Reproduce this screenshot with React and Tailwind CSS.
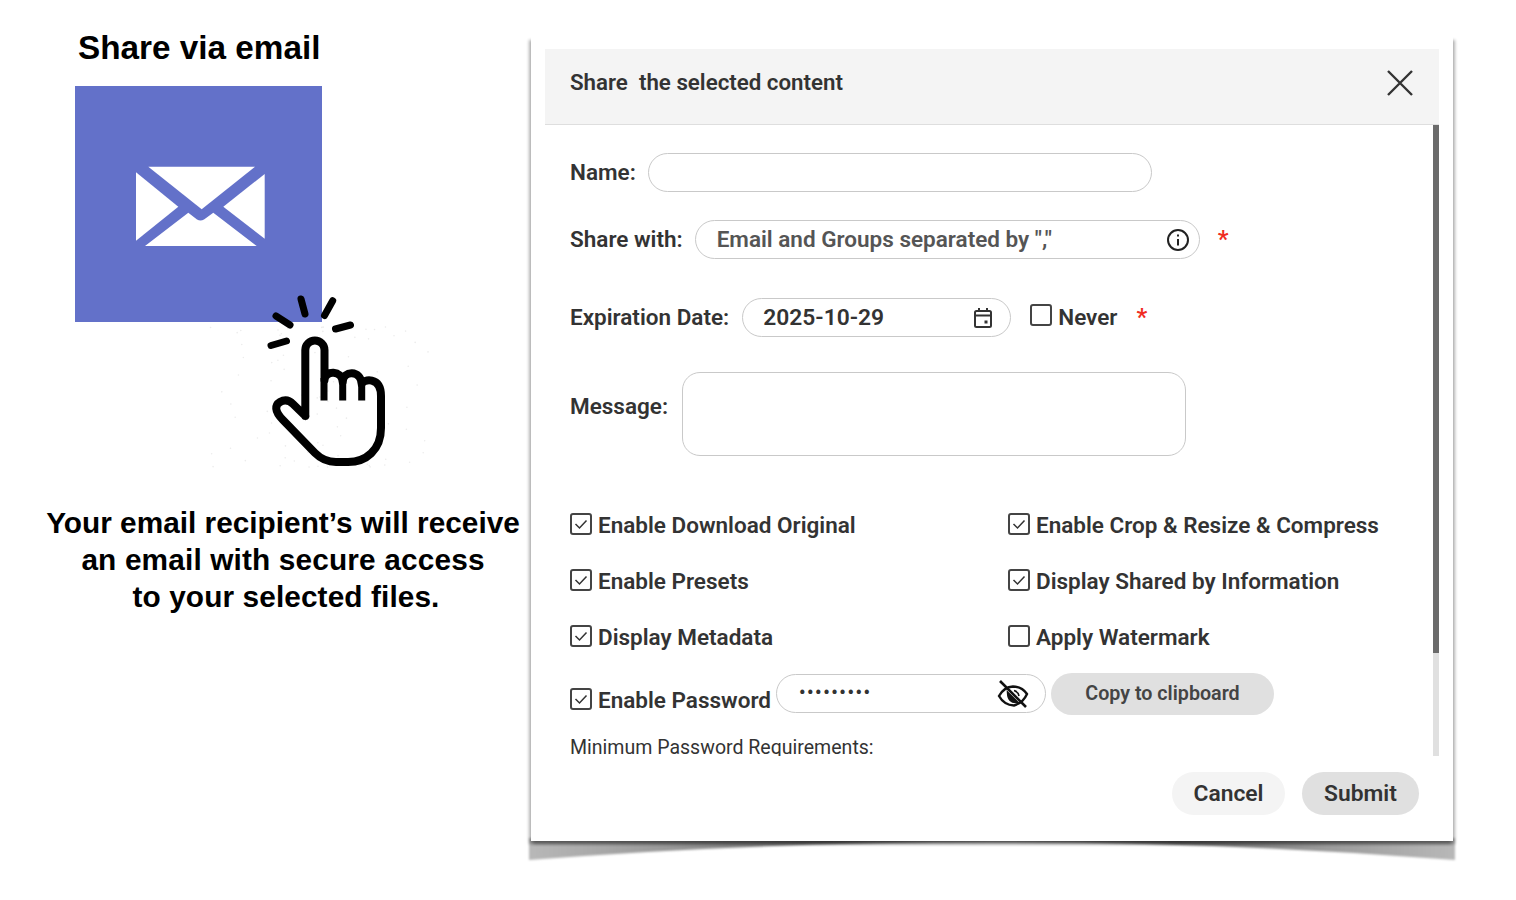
import React from "react";

const Box = ({ checked, className = "" }) => (
  <span className={`flex h-[22px] w-[22px] shrink-0 items-center justify-center rounded-[3px] border-2 border-[#444] ${className}`}>
    {checked && (
      <svg width="14" height="14" viewBox="0 0 14 14" fill="none" stroke="#333" strokeWidth="1.5">
        <path d="M1.5 7 L5.5 11 L12.5 3.5" />
      </svg>
    )}
  </span>
);

const Check = ({ label, checked = true }) => (
  <div className="flex h-[28px] items-center gap-[6px]">
    <Box checked={checked} className="-mt-1" />
    <span className="text-[22.5px] font-semibold text-[#333]">{label}</span>
  </div>
);

const Field = ({ className = "", children }) => (
  <div className={`flex h-[39px] items-center rounded-full border border-[#c9c9c9] bg-white ${className}`}>{children}</div>
);

const Label = ({ children }) => (
  <span className="text-[22.5px] font-semibold whitespace-nowrap text-[#333]">{children}</span>
);

const Star = ({ className = "" }) => (
  <span className={`text-[24px] font-semibold leading-none text-[#f02b22] ${className}`}>*</span>
);

const Envelope = () => (
  <svg width="247" height="236" viewBox="0 0 247 236" fill="#fff">
    <path d="M73.3 80.7 H180 L126.7 123.3 Z" />
    <path d="M61 86.3 L103.3 120.7 L61 154.7 Z" />
    <path d="M189.7 88 L148.3 120.7 L189.7 152.7 Z" />
    <path d="M70 160 L113.3 126.7 L122 133.5 Q125.5 135.5 129 133.5 L138.3 126.7 L181.7 160 Z" />
  </svg>
);

// faint dust around the pointer
const specks = Array.from({ length: 90 }, (_, i) => ({
  x: 115 + 112 * Math.sin(i * 12.9898) * Math.abs(Math.cos(i * 4.1)),
  y: 72 + 70 * Math.sin(i * 78.233),
}));

const Hand = () => (
  <>
    <svg className="absolute left-[205px] top-[325px]" width="232" height="146" viewBox="0 0 232 146" fill="#ececec">
      {specks.map((s, i) => (
        <circle key={i} cx={s.x} cy={s.y} r="0.8" />
      ))}
    </svg>
    <svg className="absolute left-[260px] top-[290px]" width="130" height="180" viewBox="0 0 130 180" fill="none" stroke="#000" strokeLinecap="round" strokeLinejoin="round">
      <g strokeWidth="7">
        <path d="M16 26 L30 35" />
        <path d="M41 9 L45 24" />
        <path d="M72.7 10.7 L64.5 25.5" />
        <path d="M75.5 39 L90.5 35" />
        <path d="M11 55.5 L26.5 51" />
      </g>
      <path
        strokeWidth="8"
        d="M45.3 126 V60 a9.6 9.6 0 0 1 19.2 0 V90 C65 80 82 80 82.7 92 C83 80 101 80 101.7 94 C103 89 121 86 121 106 V138 C121 160 106 172 88 172 H76 C66 172 60 168 55 163 L23 130 C14 121 15 115 20 112 C25 109 29 110 33 114 L45.3 126"
      />
      <path strokeWidth="7" strokeLinecap="butt" d="M64 88 V110.5 M82.7 90 V110.5 M101.7 93 V110.5" />
    </svg>
  </>
);

const PageShadow = () => (
  <svg className="absolute left-[516px] top-[830px]" width="952" height="44" viewBox="0 0 952 44">
    <defs>
      <linearGradient id="curl" x1="0" x2="1" y1="0" y2="0">
        <stop offset="0" stopColor="#b8b8b8" />
        <stop offset="0.14" stopColor="#9a9a9a" />
        <stop offset="0.32" stopColor="#6a6a6a" />
        <stop offset="0.5" stopColor="#8a8a8a" />
        <stop offset="0.7" stopColor="#6a6a6a" />
        <stop offset="0.86" stopColor="#9a9a9a" />
        <stop offset="1" stopColor="#b8b8b8" />
      </linearGradient>
      <filter id="soft" x="-5%" y="-50%" width="110%" height="200%">
        <feGaussianBlur stdDeviation="1.3" />
      </filter>
    </defs>
    <path d="M13 8 H939 V30 Q710 12 476 12 Q242 12 13 30 Z" fill="url(#curl)" filter="url(#soft)" />
  </svg>
);

export default function App() {
  return (
    <div className="relative flex h-[900px] w-[1516px] overflow-hidden bg-white font-['Roboto',sans-serif]">
      {/* Left intro column */}
      <div className="w-[531px] shrink-0 font-['Liberation_Sans',sans-serif] text-black">
        <h1 className="ml-[78px] mt-[28px] text-[33.3px] font-bold leading-[40px]">Share via email</h1>
        <div className="ml-[75px] mt-[18px] h-[236px] w-[247px] bg-[#6371c9]">
          <Envelope />
        </div>
        <p className="ml-[35px] mt-[182px] w-[496px] text-center text-[29.8px] font-bold leading-[37px]">
          Your email recipient’s will receive
          <br />
          <span className="tracking-[0.15px]">an email with secure access</span>
          <br />
          <span className="ml-[6px] tracking-[0.1px]">to your selected files.</span>
        </p>
      </div>

      <PageShadow />
      <Hand />

      {/* Dialog */}
      <div className="relative mt-[37px] flex h-[804px] w-[922px] flex-col bg-white px-[14px] pt-[12px] shadow-[-2px_3px_3px_rgba(0,0,0,0.3),2px_3px_3px_rgba(0,0,0,0.3)]">
        <div className="flex h-[76px] shrink-0 items-center justify-between border-b border-[#dedede] bg-[#f4f4f4] pb-[7px] pl-[25px] pr-[26px]">
          <span className="whitespace-pre text-[22.3px] font-semibold text-[#333]">Share  the selected content</span>
          <svg width="26" height="26" viewBox="0 0 26 26" stroke="#333" strokeWidth="2.4" fill="none">
            <path d="M1 1 L25 25 M25 1 L1 25" />
          </svg>
        </div>

        <div className="relative h-[631px] shrink-0 overflow-hidden pl-[25px] pt-[28px]">
          {/* scrollbar */}
          <div className="absolute right-0 top-0 h-full w-[6px] bg-[#e0e0e0]">
            <div className="h-[528px] bg-[#6b6b6b]" />
          </div>

          <div className="flex items-center gap-[12px]">
            <Label>Name:</Label>
            <Field className="w-[504px]" />
          </div>

          <div className="mt-[28px] flex items-center gap-[12px]">
            <Label>Share with:</Label>
            <Field className="w-[505px] justify-between pl-[21px] pr-[9px]">
              <span className="text-[22.5px] font-semibold text-[#555]">Email and Groups separated by ","</span>
              <svg width="24" height="24" viewBox="0 0 24 24" fill="none" stroke="#222" strokeWidth="2">
                <circle cx="12" cy="12" r="10" />
                <path d="M12 11 V17.5 M12 6.6 V8.6" />
              </svg>
            </Field>
            <Star className="ml-[6px] -mt-[2px]" />
          </div>

          <div className="mt-[39px] flex items-center gap-[13px]">
            <Label>Expiration Date:</Label>
            <Field className="w-[269px] justify-between pl-[20px] pr-[17px]">
              <span className="mt-[1px] text-[22.8px] font-semibold text-[#333]">2025-10-29</span>
              <svg width="20" height="22" viewBox="0 0 20 22" fill="none" stroke="#333" strokeWidth="2">
                <rect x="2" y="4" width="16" height="16" rx="1.5" />
                <path d="M2 8.5 H18 M6 1 V4 M14 1 V4" />
                <rect x="11.5" y="13.5" width="3" height="3" fill="#333" stroke="none" />
              </svg>
            </Field>
            <Box className="ml-[6px] -mt-[5px]" />
            <span className="-ml-[7px] text-[22.5px] font-semibold text-[#333]">Never</span>
            <Star className="ml-[6px] -mt-[2px]" />
          </div>

          <div className="mt-[35px] flex items-start gap-[14px]">
            <span className="mt-[18px]">
              <Label>Message:</Label>
            </span>
            <div className="h-[84px] w-[504px] rounded-[18px] border border-[#c9c9c9]" />
          </div>

          <div className="mt-[56px] grid w-[840px] grid-cols-[438px_1fr] gap-y-[28px]">
            <Check label="Enable Download Original" />
            <Check label="Enable Crop & Resize & Compress" />
            <Check label="Enable Presets" />
            <Check label="Display Shared by Information" />
            <Check label="Display Metadata" />
            <Check label="Apply Watermark" checked={false} />
          </div>

          <div className="mt-[21px] flex h-[42px] items-start">
            <div className="mt-[14px]">
              <Check label="Enable Password" />
            </div>
            <Field className="ml-[5px] mt-[1px] w-[270px] justify-between pl-[22px] pr-[16px]">
              <span className="-mt-[3px] text-[18px] font-bold tracking-[1.6px] text-[#333]">•••••••••</span>
              <svg width="32" height="30" viewBox="0 0 32 30" fill="none" stroke="#111" strokeWidth="2.4">
                <path d="M2 17 Q7 8 16 7.5 Q25 7.5 30 15 Q26 24 17 26.5 Q7 26 2 17 Z" />
                <path d="M3 2 L29 28" strokeWidth="2.6" />
                <path d="M11 14 L20 23 Q11.5 24 11 14 Z" fill="#111" />
                <path d="M17 11.5 Q21 12.5 22 17" strokeWidth="1.6" />
              </svg>
            </Field>
            <div className="ml-[5px] flex h-[42px] w-[223px] items-center justify-center rounded-full bg-[#e0e0e0] text-[19.7px] font-semibold text-[#444]">
              Copy to clipboard
            </div>
          </div>

          <p className="mt-[21px] text-[19.55px] leading-[24px] text-[#333]">Minimum Password Requirements:</p>
        </div>

        <div className="flex flex-1 items-start justify-end gap-[17px] pr-[20px] pt-[16px]">
          <div className="flex h-[43px] w-[113px] items-center justify-center rounded-full bg-[#f4f4f4] pt-[1px] text-[22.8px] font-semibold text-[#333]">Cancel</div>
          <div className="flex h-[43px] w-[117px] items-center justify-center rounded-full bg-[#e0e0e0] pt-[1px] text-[22.8px] font-semibold text-[#333]">Submit</div>
        </div>
      </div>
    </div>
  );
}
